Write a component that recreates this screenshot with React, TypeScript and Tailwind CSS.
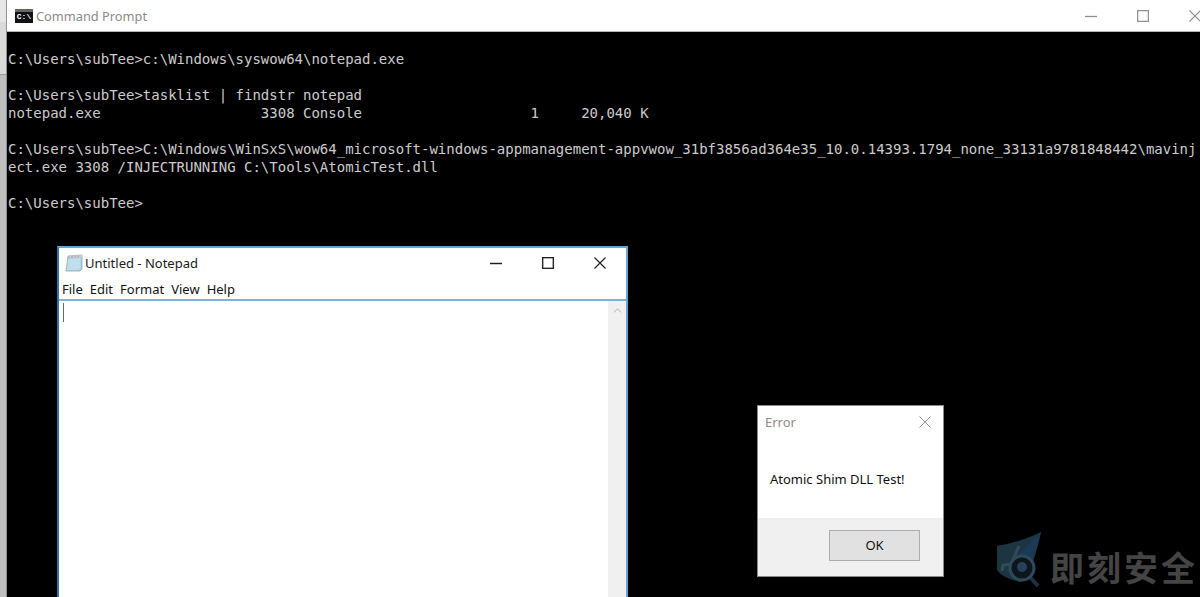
import { ChevronUp } from 'lucide-react'

const consoleLines = [
  '',
  'C:\\Users\\subTee>c:\\Windows\\syswow64\\notepad.exe',
  '',
  'C:\\Users\\subTee>tasklist | findstr notepad',
  'notepad.exe                   3308 Console                    1     20,040 K',
  '',
  'C:\\Users\\subTee>C:\\Windows\\WinSxS\\wow64_microsoft-windows-appmanagement-appvwow_31bf3856ad364e35_10.0.14393.1794_none_33131a9781848442\\mavinj',
  'ect.exe 3308 /INJECTRUNNING C:\\Tools\\AtomicTest.dll',
  '',
  'C:\\Users\\subTee>',
]

const uiFont = "font-['Noto_Sans',sans-serif]"

function MinIcon({ width = 1.2 }: { width?: number }) {
  return (
    <svg width="12" height="12" viewBox="0 0 12 12" stroke="currentColor" strokeWidth={width}>
      <path d="M0 6.5 H12" />
    </svg>
  )
}

function MaxIcon({ width = 1.2 }: { width?: number }) {
  return (
    <svg width="12" height="12" viewBox="0 0 12 12" fill="none" stroke="currentColor" strokeWidth={width}>
      <rect x="0.6" y="0.6" width="10.8" height="10.8" />
    </svg>
  )
}

function CloseIcon({ size = 12, width = 1.1 }: { size?: number; width?: number }) {
  return (
    <svg width={size} height={size} viewBox="0 0 12 12" stroke="currentColor" strokeWidth={width}>
      <path d="M0.5 0.5 L11.5 11.5 M11.5 0.5 L0.5 11.5" />
    </svg>
  )
}

function CmdIcon() {
  return (
    <div className="w-[18px] h-[14px] bg-[#111] border-t-[3px] border-[#666] flex items-center justify-center overflow-hidden">
      <span className="text-[8px] leading-none font-bold text-white font-['Liberation_Mono',monospace]">C:\</span>
    </div>
  )
}

function NotepadIcon() {
  return (
    <svg width="18" height="18" viewBox="0 0 18 18">
      <path d="M3 2 L17 1 L17 15 L15 17 L1 17 Z" fill="#a4cfe0" stroke="#9aa5aa" strokeWidth="0.8" />
      <path d="M3 2 L17 1 L17 3 L3 4 Z" fill="#cfcfcf" />
      <path d="M3 5 L15.5 4 L15.5 14 L13.5 16 L2 16 Z" fill="#bfe0ea" />
      <path d="M4 2 V4 M7 2 V4 M10 1.6 V3.6 M13 1.4 V3.4" stroke="#8b8b8b" strokeWidth="0.7" />
    </svg>
  )
}

function Notepad() {
  return (
    <div className={`absolute left-[50px] top-[246px] w-[571px] h-[360px] bg-white border-2 border-[#5fa8d6] border-l-[#2f74a8] flex flex-col ${uiFont}`}>
      <div className="h-[30px] shrink-0 flex items-center pl-[6px]">
        <NotepadIcon />
        <span className="ml-[2px] text-[13px] leading-none text-[#1a1a1a]">Untitled - Notepad</span>
        <div className="ml-auto flex items-center text-[#222]">
          <div className="w-[52px] flex justify-center"><MinIcon width={1.5} /></div>
          <div className="w-[52px] flex justify-center"><MaxIcon width={1.5} /></div>
          <div className="w-[52px] flex justify-center"><CloseIcon width={1.2} /></div>
        </div>
      </div>
      <div className="h-[23px] shrink-0 flex items-center gap-[7px] pl-[3px] pt-[2px] text-[13px] leading-none text-[#111] border-b-2 border-[#7db2d6]">
        <span>File</span>
        <span>Edit</span>
        <span>Format</span>
        <span>View</span>
        <span>Help</span>
      </div>
      <div className="flex-1 flex">
        <div className="flex-1 pl-[4px] pt-[2px]">
          <div className="w-[1px] h-[19px] bg-[#666]" />
        </div>
        <div className="w-[18px] bg-[#f0f0f0] flex justify-center pt-[3px] text-[#a5a5a5]">
          <ChevronUp size={13} strokeWidth={1.6} />
        </div>
      </div>
    </div>
  )
}

function ErrorDialog() {
  return (
    <div className={`absolute left-[750px] top-[405px] w-[187px] h-[172px] bg-white border border-[#8a8a8a] flex flex-col ${uiFont}`}>
      <div className="h-[32px] shrink-0 flex items-center justify-between pl-[7px] pr-[12px] text-[#8b8b8b]">
        <span className="text-[13px] leading-none">Error</span>
        <CloseIcon width={0.9} />
      </div>
      <div className="flex-1 pl-[12px] pt-[31px] text-[13px] leading-[20px] text-[#111]">Atomic Shim DLL Test!</div>
      <div className="h-[58px] shrink-0 bg-[#f0f0f0] flex justify-end items-start pt-[12px] pr-[23px]">
        <div className="w-[91px] h-[31px] bg-[#e1e1e1] border border-[#adadad] flex items-center justify-center text-[13px] text-[#111]">OK</div>
      </div>
    </div>
  )
}

function Watermark() {
  return (
    <div className="absolute right-[2px] top-[532px] flex items-center gap-[7px]">
      <svg width="48" height="58" viewBox="0 0 48 58">
        <path d="M2 14 C14 12 30 8 46 0 C42 20 36 40 26 50 C16 48 6 44 2 38 Z" fill="#1c3540" />
        <path d="M46 0 C42 14 38 26 32 36 L24 22 C32 14 40 6 46 0 Z" fill="#1a3a55" />
        <path d="M24 14 L16 32 L8 33 L7 39" stroke="#2f4d58" strokeWidth="3" fill="none" />
        <path d="M34 44 L43 54" stroke="#1a3346" strokeWidth="4" />
        <circle cx="27" cy="36" r="12" fill="#0c161c" stroke="#2d4a5a" strokeWidth="3" />
        <circle cx="27" cy="35" r="5" fill="#28405c" />
      </svg>
      <span className="mt-[12px] text-[34px] leading-none font-bold tracking-[3px] text-[#444444] font-['Noto_Sans_CJK_SC',sans-serif]">即刻安全</span>
    </div>
  )
}

export default function App() {
  return (
    <div className="w-[1200px] h-[597px] overflow-hidden flex">
      <div className="w-[7px] shrink-0 flex flex-col border-r border-[#8f8f8f]">
        <div className="h-[22px] bg-[#e6e6e6]" />
        <div className="h-[53px] bg-[#dadada] border-b border-[#9a9a9a]" />
        <div className="flex-1 bg-[#bfbfbf]" />
      </div>
      <div className="flex-1 min-w-0 flex flex-col relative">
        <div className={`h-[32px] shrink-0 bg-white border-b border-[#b5b5b5] flex items-center pl-[8px] ${uiFont}`}>
          <CmdIcon />
          <span className="ml-[3px] pt-[1px] text-[12.8px] leading-none text-[#8a8a8a]">Command Prompt</span>
          <div className="ml-auto -mr-[21px] flex items-center text-[#8f8f8f]">
            <div className="w-[52px] flex justify-center"><MinIcon width={1.3} /></div>
            <div className="w-[52px] flex justify-center"><MaxIcon width={1.3} /></div>
            <div className="w-[52px] flex justify-center"><CloseIcon size={12} width={1.1} /></div>
          </div>
        </div>
        <div className="flex-1 bg-black pl-[1px] whitespace-pre text-[14px] leading-[18px] text-[#cccccc] font-['DejaVu_Sans_Mono',monospace]">
          {consoleLines.map((line, i) => (
            <div key={i} className="h-[18px]">{line}</div>
          ))}
        </div>
        <Notepad />
        <ErrorDialog />
        <Watermark />
      </div>
    </div>
  )
}
